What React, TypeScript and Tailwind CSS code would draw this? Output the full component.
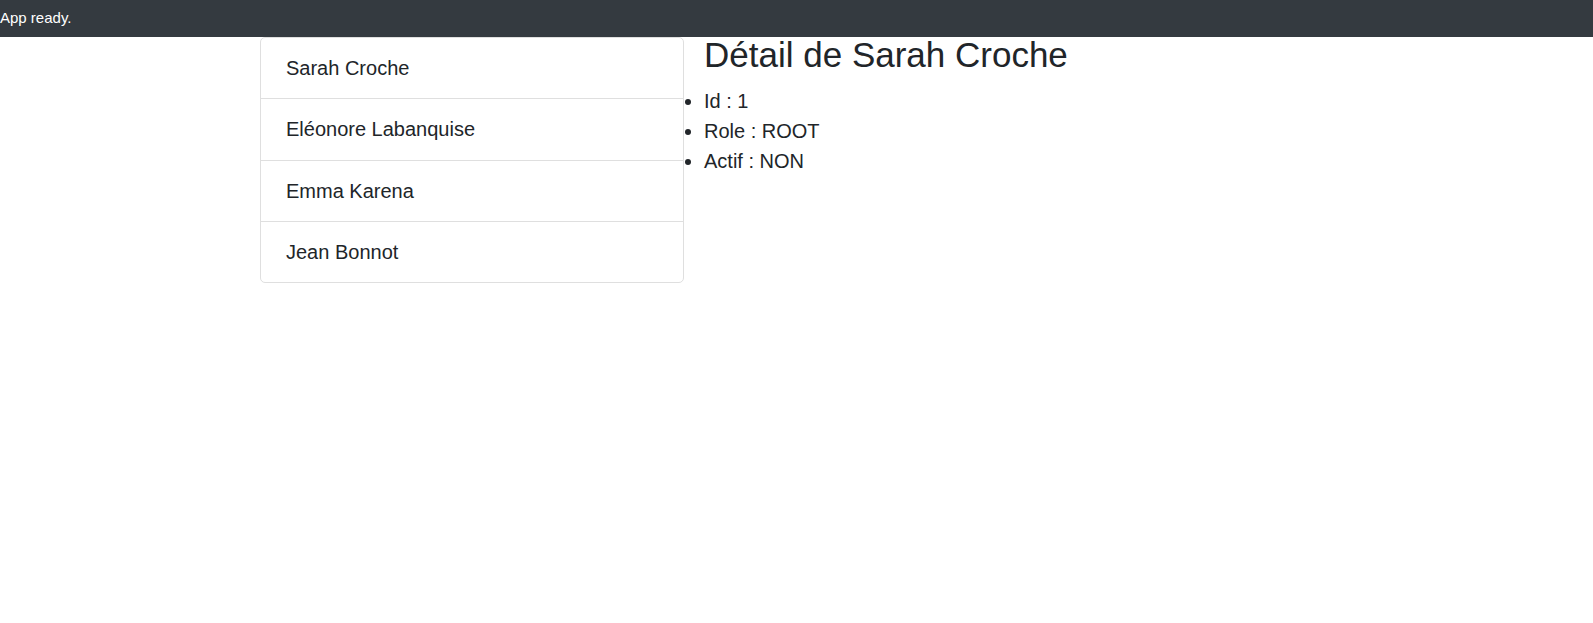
const users = [
    { id: 1, name: "Sarah Croche", role: "ROOT", actif: false },
    { id: 2, name: "Eléonore Labanquise", role: "USER", actif: true },
    { id: 3, name: "Emma Karena", role: "USER", actif: true },
    { id: 4, name: "Jean Bonnot", role: "ADMIN", actif: false },
]

export default function App() {
    const selected = users[0]
    return (
        <div className="min-h-screen bg-white text-[#212529] font-['Liberation_Sans',Arial,sans-serif]">
            <div className="relative z-10 h-[37px] bg-[#343a40] text-white text-[15px] leading-[36px]">
                App ready.
            </div>
            <div className="w-[1073px] mx-auto flex items-start">
                <ul className="w-[424px] flex flex-col border border-[#dfdfdf] rounded-[5px]">
                    {users.map((u, i) => (
                        <li
                            key={u.id}
                            className={
                                "px-[25px] py-[15px] text-[20px] leading-[30.25px] cursor-pointer " +
                                (i > 0 ? "border-t border-[#dfdfdf]" : "")
                            }>
                            {u.name}
                        </li>
                    ))}
                </ul>
                <div className="flex-1 pl-[20px] mt-[-3px]">
                    <h1 className="text-[35px] leading-[42px] mb-[10px]">Détail de {selected.name}</h1>
                    <ul className="list-disc list-outside text-[20px] leading-[30px]">
                        <li>Id : {selected.id}</li>
                        <li>Role : {selected.role}</li>
                        <li>Actif : {selected.actif ? "OUI" : "NON"}</li>
                    </ul>
                </div>
            </div>
        </div>
    )
}
